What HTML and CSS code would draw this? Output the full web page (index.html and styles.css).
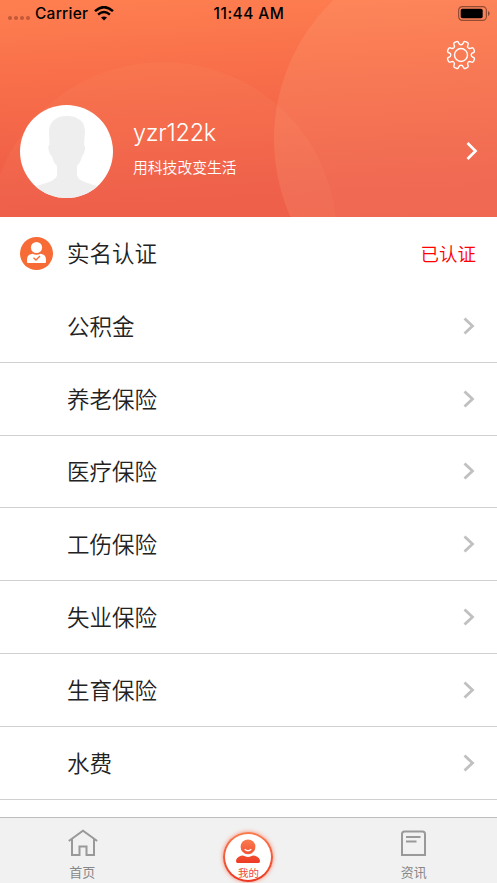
FILE: index.html
```html
<!DOCTYPE html>
<html lang="zh-CN">
<head>
<meta charset="utf-8">
<title>我的</title>
<link rel="stylesheet" href="styles.css">
</head>
<body>
<div class="app">
  <header class="hero">
    <svg class="hero-bg" viewBox="0 0 497 217" aria-hidden="true">
      <circle cx="163" cy="236" r="174" fill="#ffb480" fill-opacity=".08"/>
      <circle cx="466" cy="139" r="192" fill="#ffb890" fill-opacity=".17"/>
    </svg>
    <div class="status">
      <div class="status-left">
        <span class="dots"><i></i><i></i><i></i><i></i></span>
        <span class="carrier">Carrier</span>
        <svg class="wifi" width="20" height="15" viewBox="0 0 20 15" fill="none" stroke="#000">
          <path d="M1 5.1Q10-2.9 19 5.1" stroke-width="2.5"/>
          <path d="M4.1 8.6Q10 3.3 15.9 8.6" stroke-width="2.4"/>
          <path d="M10 14.6L7 11.6Q10 9.2 13 11.6Z" fill="#000" stroke="none"/>
        </svg>
      </div>
      <div class="time">11:44 AM</div>
      <svg class="battery" width="32" height="15" viewBox="0 0 32 15">
        <rect x=".6" y=".6" width="27.8" height="13.8" rx="3.8" fill="none" stroke="#000" stroke-opacity=".42" stroke-width="1.2"/>
        <rect x="2.7" y="2.7" width="22" height="9.6" rx="1.7"/>
        <path d="M30 5v5q1.7-.9 1.7-2.5T30 5Z" fill-opacity=".45"/>
      </svg>
    </div>
    <div class="tools">
      <svg width="32" height="32" viewBox="-16 -16 32 32" fill="none" stroke="#fff" stroke-width="1.4">
        <defs><path id="tooth" d="M-3.900-9.420C-2.800-9.880-2.400-10.800-2.500-12Q-2.600-14-1-14H1Q2.600-14 2.500-12C2.400-10.800 2.800-9.880 3.900-9.420"/></defs>
        <use href="#tooth" transform="rotate(22.5)"/><use href="#tooth" transform="rotate(67.5)"/>
        <use href="#tooth" transform="rotate(112.5)"/><use href="#tooth" transform="rotate(157.5)"/>
        <use href="#tooth" transform="rotate(202.5)"/><use href="#tooth" transform="rotate(247.5)"/>
        <use href="#tooth" transform="rotate(292.5)"/><use href="#tooth" transform="rotate(337.5)"/>
        <circle r="6.5"/>
      </svg>
    </div>
    <div class="profile">
      <svg class="avatar" width="93" height="93" viewBox="0 0 93 93">
        <defs><clipPath id="round"><circle cx="46.5" cy="46.5" r="46.5"/></clipPath></defs>
        <circle cx="46.5" cy="46.5" r="46.5" fill="#fff"/>
        <path clip-path="url(#round)" fill="#eee" d="M46 11C36 11 29 17 29 27L29.500 40C27 40 29 50 32 51C33 57 36 60 37 61V70C36 77 23 78 15 82V95H79V82C70 78 58 77 57 70V61C59 59 61 56 62 51C65 49 66 40 64 40L65 27C65 20 62 15 58 14C55 11 50 11 46 11Z"/>
      </svg>
      <div class="who">
        <div class="name">yzr122k</div>
        <div class="motto">用科技改变生活</div>
      </div>
      <svg class="go" width="12" height="18" viewBox="0 0 12 18" fill="none" stroke="#fff" stroke-width="2.7"><path d="M1.500 1L9.500 9L1.500 17"/></svg>
    </div>
  </header>

  <main class="list">
    <div class="row verified">
      <svg class="badge" width="33" height="33" viewBox="0 0 33 33">
        <circle cx="16.500" cy="16.500" r="16.500" fill="#f66b36"/>
        <circle cx="16.500" cy="10.500" r="5.600" fill="#fff"/>
        <path fill="#fff" d="M7 25V23Q7 17.300 12.500 16.700Q16.500 19 20.500 16.700Q26 17.300 26 23V25Q26 26 25 26H8Q7 26 7 25Z"/>
        <path d="M13.500 20.700L16 23L20 19" fill="none" stroke="#f66b36" stroke-width="1.300"/>
      </svg>
      <span class="label">实名认证</span><span class="state">已认证</span>
    </div>
    <div class="row"><span class="label">公积金</span><svg class="chev" viewBox="0 0 12 18"><path d="M1.500 1.500L9.500 9L1.500 16.500"/></svg></div>
    <div class="row"><span class="label">养老保险</span><svg class="chev" viewBox="0 0 12 18"><path d="M1.500 1.500L9.500 9L1.500 16.500"/></svg></div>
    <div class="row"><span class="label">医疗保险</span><svg class="chev" viewBox="0 0 12 18"><path d="M1.500 1.500L9.500 9L1.500 16.500"/></svg></div>
    <div class="row"><span class="label">工伤保险</span><svg class="chev" viewBox="0 0 12 18"><path d="M1.500 1.500L9.500 9L1.500 16.500"/></svg></div>
    <div class="row"><span class="label">失业保险</span><svg class="chev" viewBox="0 0 12 18"><path d="M1.500 1.500L9.500 9L1.500 16.500"/></svg></div>
    <div class="row"><span class="label">生育保险</span><svg class="chev" viewBox="0 0 12 18"><path d="M1.500 1.500L9.500 9L1.500 16.500"/></svg></div>
    <div class="row"><span class="label">水费</span><svg class="chev" viewBox="0 0 12 18"><path d="M1.500 1.500L9.500 9L1.500 16.500"/></svg></div>
  </main>

  <nav class="tabs">
    <div class="tab">
      <svg width="30" height="28" viewBox="0 0 30 28" fill="none" stroke="#999" stroke-width="2"><path d="M.8 12L15 1.800L29.200 12M4 10V26H11.500V17.500H18.500V26H26V10"/></svg>
      <span>首页</span>
    </div>
    <div class="tab">
      <div class="me">
        <svg width="26" height="25" viewBox="0 0 26 25">
          <defs><linearGradient id="warm" x1="0" y1="0" x2="0" y2="25" gradientUnits="userSpaceOnUse"><stop stop-color="#fb7d50"/><stop offset="1" stop-color="#ec3722"/></linearGradient></defs>
          <g fill="url(#warm)"><circle cx="13" cy="7.800" r="7.400"/><path d="M1 22Q1 18.500 6 16.700Q8 16 9.500 17Q13 19 16.500 17Q18 16 20 16.700Q25 18.500 25 22Q25 24 23.500 24H2.500Q1 24 1 22Z"/></g>
          <path d="M9.700 10.300Q13 13.300 16.300 10.300" fill="none" stroke="#fff" stroke-width="1.300"/>
        </svg>
        <span>我的</span>
      </div>
    </div>
    <div class="tab">
      <svg width="30" height="28" viewBox="0 0 30 28" fill="none" stroke="#999" stroke-width="2"><path d="M5.500 2.500H23.500Q26 2.500 26 5V26H3V5Q3 2.500 5.500 2.500Z"/><path d="M7 8H21.500M7 12.500H17.500"/></svg>
      <span>资讯</span>
    </div>
  </nav>
</div>
</body>
</html>
```
FILE: styles.css
```css
* { box-sizing: border-box; }
body { margin: 0; background: #fff; font-family: "Inter", "Noto Sans CJK SC", sans-serif; }
svg { display: block; flex: none; }
.app { height: 883px; display: flex; flex-direction: column; overflow: hidden; }

.hero {
  position: relative;
  flex: none;
  height: 217px;
  background: linear-gradient(177deg, #fe7e50 3%, #f9714a 28%, #ee5b47 82%, #ed5846);
}
.hero-bg { position: absolute; inset: 0; width: 100%; height: 100%; }
.status, .tools, .profile { position: relative; }
.status {
  height: 27px;
  padding: 0 7px 0 8px;
  display: grid;
  grid-template-columns: 1fr auto 1fr;
  align-items: center;
  font-size: 15.5px;
  font-weight: 450;
  color: #000;
}
.status-left { display: flex; align-items: center; }
.dots { display: flex; gap: 2px; margin: 9px 5px 0 0; }
.dots i { width: 4px; height: 4px; border-radius: 50%; background: rgba(60, 10, 0, .3); }
.carrier { letter-spacing: .25px; }
.wifi { margin-left: 6px; }
.time { letter-spacing: .45px; }
.battery { justify-self: end; }
.tools { height: 56px; padding: 12px 20px 0; display: flex; justify-content: flex-end; }
.profile { height: 134px; padding: 0 19px 0 20px; display: flex; align-items: center; color: #fff; }
.avatar { margin-top: 2px; }
.go { margin-top: 2px; }
.who { flex: 1; margin-left: 20px; }
.name { font-size: 23.5px; line-height: 30px; font-weight: 350; letter-spacing: -.25px; }
.motto { margin-top: 6px; font-size: 14.8px; line-height: 28px; font-weight: 350; }

.list { flex: 1; min-height: 0; overflow: hidden; }
.row {
  height: 72.8px;
  padding: 2px 22px 0 67px;
  display: flex;
  align-items: center;
  justify-content: space-between;
  border-bottom: 1px solid #d0d0d0;
  color: #222;
}
.row.verified { height: 73px; padding: 2px 21px 0 20px; border-bottom-color: transparent; }
.label { font-size: 22.5px; line-height: 32px; font-weight: 350; }
.badge { margin: -2px 14px 0 0; }
.state { margin-left: auto; margin-top: -2px; font-size: 18.5px; color: #f00; font-weight: 350; }
.chev { width: 12px; height: 18px; margin-top: -2px; fill: none; stroke: #c0c0c0; stroke-width: 2.8; }

.tabs {
  flex: none;
  height: 66px;
  display: grid;
  grid-template-columns: repeat(3, 1fr);
  background: #f1f1f1;
  border-top: 1px solid #bdbdbd;
}
.tab { display: flex; flex-direction: column; align-items: center; padding-top: 11px; font-size: 13px; line-height: 20px; color: #888; }
.tab > span { margin: 5px 1px 0 0; }
.me {
  width: 50px;
  height: 50px;
  margin-top: 3px;
  padding-top: 5px;
  display: flex;
  flex-direction: column;
  align-items: center;
  border-radius: 50%;
  border: 2px solid transparent;
  background: linear-gradient(#fff, #fff) padding-box, linear-gradient(#fb7d50, #ec3722) border-box;
  box-shadow: 0 0 4px rgba(255, 80, 40, .65);
}
.me span { margin-top: 3px; font-size: 10.5px; line-height: 14px; color: #ee4c32; }
```
